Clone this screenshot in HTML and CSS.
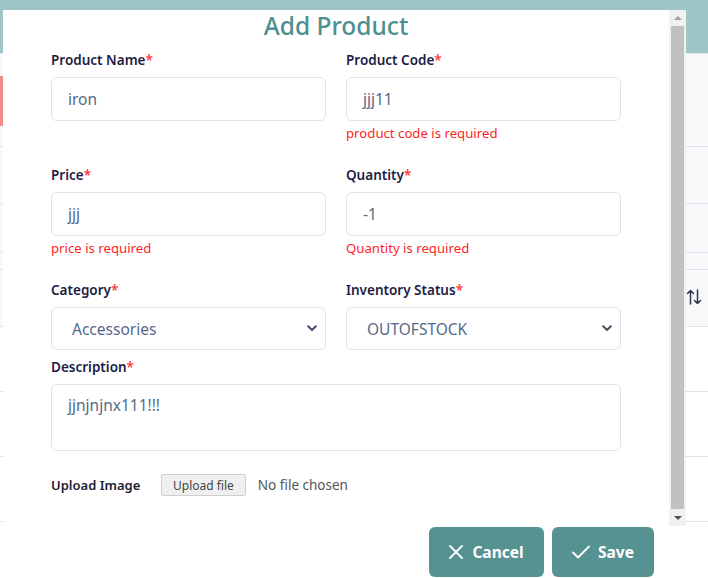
FILE: index.html
```
<!DOCTYPE html>
<html>
<head>
<meta charset="utf-8">
<link rel="stylesheet" href="styles.css">
</head>
<body>
<div class="page">
  <div class="topbar"></div>
  <div class="toolbar"><span class="btn-red"></span></div>
  <div class="trow gray h57"></div>
  <div class="trow gray h49"></div>
  <div class="trow gray h17"></div>
  <div class="trow gray h57 sort">
    <svg class="sort-icon" width="16" height="16" viewBox="0 0 16 16"><path d="M4.5 15 V1.5 M1.5 4.5 L4.5 1.5 L7.5 4.5 M11.5 1 V14.5 M8.5 11.5 L11.5 14.5 L14.5 11.5" fill="none" stroke="#2d3550" stroke-width="1.5" stroke-linecap="round" stroke-linejoin="round"/></svg>
  </div>
  <div class="trow h65"></div>
  <div class="trow h65"></div>
  <div class="trow h65"></div>
  <div class="trow h65"></div>
</div>

<div class="modal">
  <div class="modal-main">
    <div class="modal-body">
      <h1 class="title">Add Product</h1>
      <div class="grid">
        <div class="field">
          <label class="label">Product Name<span class="req">*</span></label>
          <div class="input">iron</div>
        </div>
        <div class="field">
          <label class="label">Product Code<span class="req">*</span></label>
          <div class="input">jjj11</div>
          <div class="error">product code is required</div>
        </div>
        <div class="field">
          <label class="label">Price<span class="req">*</span></label>
          <div class="input">jjj</div>
          <div class="error">price is required</div>
        </div>
        <div class="field">
          <label class="label">Quantity<span class="req">*</span></label>
          <div class="input">-1</div>
          <div class="error">Quantity is required</div>
        </div>
        <div class="field">
          <label class="label">Category<span class="req">*</span></label>
          <div class="select"><span>Accessories</span>
            <svg class="chev" width="10" height="7" viewBox="0 0 10 7"><path d="M1.2 1.3 L5 5 L8.8 1.3" fill="none" stroke="#444e6a" stroke-width="2" stroke-linecap="round" stroke-linejoin="round"/></svg>
          </div>
        </div>
        <div class="field">
          <label class="label">Inventory Status<span class="req">*</span></label>
          <div class="select"><span>OUTOFSTOCK</span>
            <svg class="chev" width="10" height="7" viewBox="0 0 10 7"><path d="M1.2 1.3 L5 5 L8.8 1.3" fill="none" stroke="#444e6a" stroke-width="2" stroke-linecap="round" stroke-linejoin="round"/></svg>
          </div>
        </div>
        <div class="field wide">
          <label class="label">Description<span class="req">*</span></label>
          <div class="textarea">jjnjnjnx111!!!</div>
        </div>
      </div>
      <div class="upload">
        <span class="upload-label">Upload Image</span>
        <span class="file-btn">Upload file</span>
        <span class="file-none">No file chosen</span>
      </div>
    </div>
    <div class="scrollbar">
      <div class="sb-arrow"><span class="tri-up"></span></div>
      <div class="sb-track"><div class="sb-thumb"></div></div>
      <div class="sb-arrow"><span class="tri-down"></span></div>
    </div>
  </div>
  <div class="footer">
    <button class="btn">
      <svg width="14" height="14" viewBox="0 0 14 14"><path d="M1 1 L13 13 M13 1 L1 13" stroke="#fff" stroke-width="1.8" fill="none" stroke-linecap="round"/></svg>
      <span>Cancel</span>
    </button>
    <button class="btn save">
      <svg width="18" height="14" viewBox="0 0 18 14"><path d="M1 7.5 L6 12.5 L17 1.5" stroke="#fff" stroke-width="1.8" fill="none" stroke-linecap="round" stroke-linejoin="round"/></svg>
      <span>Save</span>
    </button>
  </div>
</div>
</body>
</html>
```
FILE: styles.css
```
* { box-sizing: border-box; }
html, body { margin: 0; padding: 0; }
body {
  width: 708px;
  height: 578px;
  overflow: hidden;
  position: relative;
  font-family: "Noto Sans", "Open Sans", sans-serif;
  background: #fff;
}
.page { width: 708px; }
.topbar { height: 54px; background: #a0c5c7; border-bottom: 1px solid #e3e6ea; }
.toolbar { height: 93px; background: #f8f9fa; border-bottom: 1px solid #dfe2e6; padding-top: 22px; }
.btn-red { display: block; width: 80px; height: 50px; background: #f28d8d; }
.trow { border-bottom: 1px solid #dfe2e6; }
.gray { background: #f8f9fa; }
.h57 { height: 57px; }
.h49 { height: 49px; }
.h17 { height: 17px; }
.h65 { height: 65px; }
.sort { display: flex; justify-content: flex-end; align-items: center; padding: 0 6px 0 0; }
.sort-icon { display: block; margin-top: -2px; }

.modal {
  position: absolute;
  left: 3px;
  top: 10px;
  width: 683px;
  height: 580px;
  background: #fff;
  display: flex;
  flex-direction: column;
}
.modal-main { display: flex; height: 516px; }
.modal-body { flex: 1; padding: 0 48px; overflow: hidden; }
.title {
  margin: 0 0 8px;
  height: 32px;
  line-height: 32px;
  text-align: center;
  font-size: 24.5px;
  font-weight: 500;
  color: #4f8f92;
}
.grid {
  display: grid;
  grid-template-columns: 275px 275px;
  column-gap: 20px;
  row-gap: 7px;
}
.wide { grid-column: 1 / 3; }
.field { display: flex; flex-direction: column; }
.label {
  font-size: 13.5px;
  font-weight: 600;
  line-height: 20px;
  color: #1c1d45;
  margin-bottom: 7px;
}
.req { color: #ff3b3b; }
.input, .select, .textarea {
  border: 1px solid #dde2ea;
  border-radius: 6px;
  color: #56698a;
  font-size: 15.5px;
}
.input { height: 44px; padding: 0 16px; display: flex; align-items: center; }
.select {
  height: 43px;
  padding: 0 8px 0 20px;
  display: flex;
  align-items: center;
  justify-content: space-between;
}
.textarea { height: 67px; padding: 8px 16px; line-height: 24px; }
.error {
  margin-top: 2px;
  margin-bottom: 15px;
  line-height: 20px;
  font-size: 13.2px;
  color: #ff1f1f;
}
.upload { display: flex; align-items: center; margin-top: 23px; height: 22px; }
.upload-label { font-size: 13px; font-weight: 600; color: #1c1d30; width: 110px; }
.file-btn {
  height: 22px;
  padding: 0 11px;
  background: #efefef;
  border: 1px solid #cfcfcf;
  border-radius: 2px;
  font-size: 12px;
  color: #444;
  display: flex;
  align-items: center;
}
.file-none { font-size: 13.5px; color: #555; margin-left: 12px; }

.scrollbar { width: 17px; background: #f1f1f1; display: flex; flex-direction: column; }
.sb-arrow { height: 16px; display: flex; align-items: center; justify-content: center; }
.tri-up { width: 0; height: 0; border-left: 4px solid transparent; border-right: 4px solid transparent; border-bottom: 4px solid #a3a3a3; }
.tri-down { width: 0; height: 0; border-left: 4px solid transparent; border-right: 4px solid transparent; border-top: 4px solid #505050; }
.sb-track { flex: 1; padding: 0 2px 1px; display: flex; }
.sb-thumb { flex: 1; background: #c1c1c1; }

.footer { display: flex; justify-content: flex-end; gap: 8px; padding: 1px 32px 0 0; }
.btn {
  height: 50px;
  width: 115px;
  border: none;
  border-radius: 6px;
  background: #569292;
  color: #fff;
  font-family: "Noto Sans", sans-serif;
  font-size: 15.5px;
  font-weight: 700;
  display: flex;
  align-items: center;
  justify-content: center;
  gap: 9px;
  padding: 0;
}
.btn.save { width: 102px; gap: 8px; }
```
